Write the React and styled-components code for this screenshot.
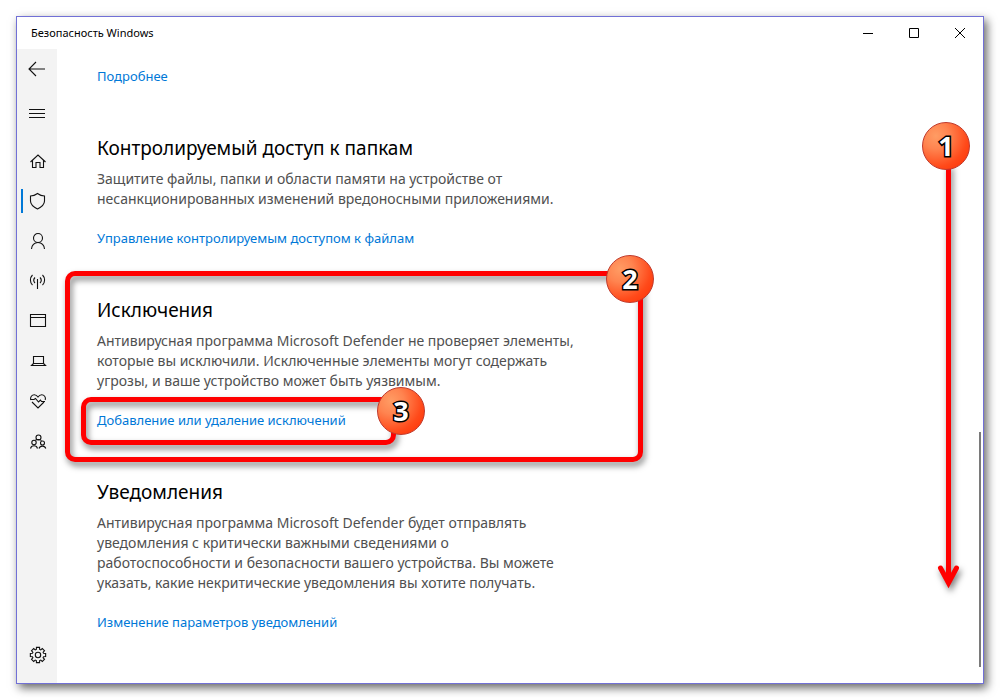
import React from 'react'
import styled, { createGlobalStyle, css } from 'styled-components'

const GlobalStyle = createGlobalStyle`
  * {
    box-sizing: border-box;
  }

  body {
    margin: 0;
    background: #fff;
    color: #000;
    font-family: 'Noto Sans', 'Open Sans', sans-serif;
    font-size: 14px;
    line-height: 20px;
  }
`

const gearPath = () => {
  // eight teeth around the hub
  const points = []
  for (let i = 0; i < 8; i++) {
    const base = (i * Math.PI) / 4
    const corners = [[-0.29, 5.8], [-0.2, 7.8], [0.2, 7.8], [0.29, 5.8]]
    corners.forEach(([offset, r]) => {
      const x = 11 + r * Math.sin(base + offset)
      const y = 10 - r * Math.cos(base + offset)
      points.push(`${x.toFixed(2)} ${y.toFixed(2)}`)
    })
  }
  return `M${points.join('L')}Z`
}

const icons = {
  back: <path d="M18 10H2.5M9 3L2 10l7 7" />,
  menu: <path d="M2 6.5h16M2 10.5h16M2 14.5h16" />,
  home: <path d="M3.5 11L11 4l7.500 7M5.500 9.500v7H9v-5h4v5h3.500v-7" />,
  shield: <path d="M10.500 2.500C8.500 4 6 5 3.500 5v5c0 3.500 3 6 7 8 4-2 7-4.500 7-8V5c-2.500 0-5-1-7-2.500z" />,
  person: (
    <>
      <circle cx="11" cy="7" r="4.500" />
      <path d="M4.500 18a6.500 6.500 0 0 1 13 0" />
    </>
  ),
  signal: (
    <>
      <path d="M10.500 8v10M8 6.500a4 4 0 0 0 0 5.500M13 6.500a4 4 0 0 1 0 5.500" />
      <path d="M5.500 4a7 7 0 0 0 0 10M15.500 4a7 7 0 0 1 0 10" />
    </>
  ),
  app: <path d="M3.500 3.500h15v12h-15zM3.500 6.500h15" />,
  laptop: <path d="M6.500 5.500h10v7h-10zM6.500 12.500l-2 2h14l-2-2" />,
  heart: (
    <>
      <path d="M3.800 9C2.800 6 5 3.700 7.300 3.700c1.700 0 2.700.8 3.700 2.300 1-1.500 2-2.300 3.700-2.300C17 3.700 19.200 6 18.200 9" />
      <path d="M3.500 8.500h3.500l1.500-1 3 3.500 2-2 1 1.500h3.500M5 11l6 6 6-6" />
    </>
  ),
  family: (
    <>
      <circle cx="11.500" cy="6.500" r="2.500" />
      <circle cx="7" cy="11.500" r="2.200" />
      <circle cx="15.500" cy="12" r="2" />
      <path d="M3.500 17.500a3.600 3.600 0 0 1 7 0M12 17.500a3.600 3.600 0 0 1 6.800 0M8.500 9c1-.7 5-.7 6 .6" />
    </>
  ),
  gear: (
    <>
      <path d={gearPath()} />
      <circle cx="11" cy="10" r="2.700" />
    </>
  ),
}

const navItems = [
  { icon: 'home', label: 'Домой' },
  { icon: 'shield', label: 'Защита от вирусов и угроз', active: true },
  { icon: 'person', label: 'Защита учетных записей' },
  { icon: 'signal', label: 'Брандмауэр и защита сети' },
  { icon: 'app', label: 'Управление приложениями и браузером' },
  { icon: 'laptop', label: 'Безопасность устройства' },
  { icon: 'heart', label: 'Производительность и работоспособность' },
  { icon: 'family', label: 'Параметры для семьи' },
]

const Icon = ({ name }) => (
  <IconSvg viewBox="0 0 20 20" aria-hidden="true">{icons[name]}</IconSvg>
)

export default function App () {
  return (
    <>
      <GlobalStyle />
      <Window>
        <TitleBar>
          <Title>Безопасность Windows</Title>
          <WindowButton aria-label="Свернуть">
            <ControlSvg viewBox="0 0 10 10"><path d="M0 5.5h10" /></ControlSvg>
          </WindowButton>
          <WindowButton aria-label="Развернуть">
            <ControlSvg viewBox="0 0 10 10"><path d="M.5.5h9v9h-9z" /></ControlSvg>
          </WindowButton>
          <WindowButton aria-label="Закрыть">
            <ControlSvg viewBox="0 0 10 10"><path d="M0 0l10 10M10 0L0 10" /></ControlSvg>
          </WindowButton>
        </TitleBar>
        <Body>
          <Sidebar>
            <NavButton aria-label="Назад"><Icon name="back" /></NavButton>
            <NavButton aria-label="Меню"><Icon name="menu" /></NavButton>
            <NavList>
              {navItems.map((item) => (
                <NavButton key={item.icon} aria-label={item.label} $active={item.active}>
                  <Icon name={item.icon} />
                </NavButton>
              ))}
            </NavList>
            <NavButton aria-label="Параметры"><Icon name="gear" /></NavButton>
          </Sidebar>
          <Content>
            <Link href="#more">Подробнее</Link>
            <Section>
              <Heading>Контролируемый доступ к папкам</Heading>
              <Text>Защитите файлы, папки и области памяти на устройстве от несанкционированных изменений вредоносными приложениями.</Text>
              <Link href="#folders">Управление контролируемым доступом к файлам</Link>
            </Section>
            <Section>
              <SectionFrame />
              <Heading>Исключения</Heading>
              <Text>Антивирусная программа Microsoft Defender не проверяет элементы, которые вы исключили. Исключенные элементы могут содержать угрозы, и ваше устройство может быть уязвимым.</Text>
              <LinkHolder>
                <LinkFrame />
                <Link href="#exclusions">Добавление или удаление исключений</Link>
                <LinkBadge>3</LinkBadge>
              </LinkHolder>
              <SectionBadge>2</SectionBadge>
            </Section>
            <Section>
              <Heading>Уведомления</Heading>
              <Text>Антивирусная программа Microsoft Defender будет отправлять уведомления с критически важными сведениями о работоспособности и безопасности вашего устройства. Вы можете указать, какие некритические уведомления вы хотите получать.</Text>
              <Link href="#notifications">Изменение параметров уведомлений</Link>
            </Section>
          </Content>
          <ScrollTrack><ScrollThumb /></ScrollTrack>
          <ScrollHint>
            <Badge>1</Badge>
            <ArrowSvg viewBox="0 0 48 430" aria-hidden="true">
              <path d="M26.500 0v412" />
              <path d="M18.500 402l8 15 8-15" />
            </ArrowSvg>
          </ScrollHint>
        </Body>
      </Window>
    </>
  )
}

const Window = styled.div`
  display: flex;
  flex-direction: column;
  min-height: calc(100vh - 32px);
  margin: 16px;
  background: #fff;
  border: 1px solid #7170d6;
  box-shadow: 3px 4px 9px rgba(0, 0, 0, 0.6);
`

const TitleBar = styled.header`
  display: flex;
  align-items: center;
  height: 32px;
  padding-left: 14px;
`

const Title = styled.div`
  flex: 1;
  font-size: 11px;
`

const buttonReset = css`
  display: flex;
  align-items: center;
  justify-content: center;
  padding: 0;
  background: none;
  border: none;
  cursor: pointer;
`

const WindowButton = styled.button`
  ${buttonReset}
  width: 46px;
  height: 32px;
`

const ControlSvg = styled.svg`
  width: 10px;
  height: 10px;
  fill: none;
  stroke: #000;
`

const Body = styled.div`
  position: relative;
  display: flex;
  flex: 1;
`

const Sidebar = styled.nav`
  display: flex;
  flex-direction: column;
  gap: 4px;
  width: 40px;
  padding-bottom: 8px;
  background: #f3f3f3;
`

const NavList = styled.div`
  flex: 1;
  padding-top: 4px;
`

const NavButton = styled.button`
  ${buttonReset}
  position: relative;
  width: 40px;
  height: 40px;

  ${({ $active }) => $active && css`
    &::before {
      content: '';
      position: absolute;
      left: 4px;
      width: 2px;
      height: 24px;
      background: #0078d7;
    }
  `}
`

const IconSvg = styled.svg`
  width: 20px;
  height: 20px;
  fill: none;
  stroke: #111;
  stroke-width: 1.1;
`

const Content = styled.main`
  flex: 1;
  padding: 17px 40px 40px;
`

const Section = styled.section`
  position: relative;
  max-width: 484px;
  margin-top: 48px;
`

const Heading = styled.h2`
  margin: 0 0 7px;
  font-size: 19px;
  font-weight: 400;
  line-height: 28px;
`

const Text = styled.p`
  margin: 0 0 19px;
  color: #505050;
`

const Link = styled.a`
  display: block;
  width: fit-content;
  color: #0078d7;
  font-size: 13px;
  text-decoration: none;
`

const LinkHolder = styled.div`
  position: relative;
`

const Frame = styled.div`
  position: absolute;
  border: 5px solid #f00;
  border-radius: 10px;
  filter: drop-shadow(2px 4px 3px rgba(0, 0, 0, 0.5));
  pointer-events: none;
`

const SectionFrame = styled(Frame)`
  top: -25px;
  bottom: -32px;
  left: -32px;
  width: 578px;
`

const LinkFrame = styled(Frame)`
  top: -13px;
  bottom: -15px;
  left: -16px;
  width: 315px;
`

const Badge = styled.div`
  display: flex;
  align-items: center;
  justify-content: center;
  width: 48px;
  height: 48px;
  background: radial-gradient(circle at 28% 28%, #ff9c64 0, #ff8450 28%, #ff4a1a 66%, #ff2c00 100%);
  border: 1px solid #c0392b;
  border-radius: 50%;
  color: #fff;
  font-size: 27px;
  font-weight: 700;
  -webkit-text-stroke: 3px #000;
  paint-order: stroke fill;
`

const SectionBadge = styled(Badge)`
  position: absolute;
  top: -41px;
  left: 509px;
`

const LinkBadge = styled(Badge)`
  position: absolute;
  top: -23px;
  left: 280px;
`

const ScrollTrack = styled.div`
  display: flex;
  align-items: flex-end;
  width: 4px;
  padding-bottom: 16px;
`

const ScrollThumb = styled.div`
  width: 2px;
  height: 38%;
  background: #7a7a7a;
`

const ScrollHint = styled.div`
  position: absolute;
  top: 73px;
  right: 13px;
  pointer-events: none;

  ${Badge} {
    position: relative;
    z-index: 1;
  }
`

const ArrowSvg = styled.svg`
  display: block;
  width: 48px;
  height: 430px;
  margin-top: -4px;
  overflow: visible;
  fill: none;
  stroke: #f00;
  stroke-width: 5;
  stroke-linecap: round;
  filter: drop-shadow(2px 4px 3px rgba(0, 0, 0, 0.5));
`
